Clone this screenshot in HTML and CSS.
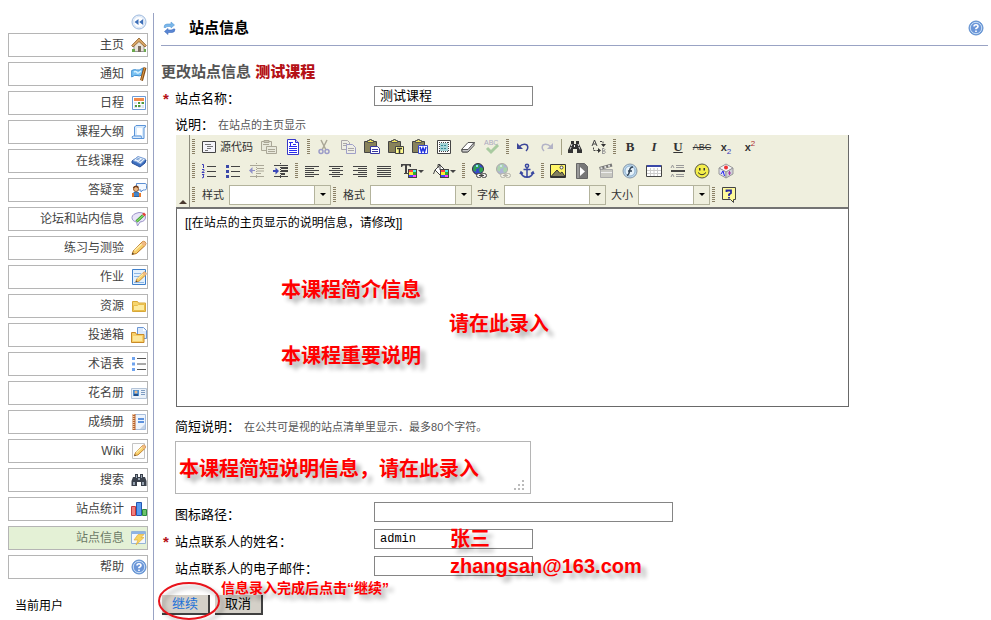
FILE: index.html
```html
<!DOCTYPE html>
<html lang="zh-CN">
<head>
<meta charset="utf-8">
<title>站点信息</title>
<link rel="stylesheet" href="styles.css">
</head>
<body>
<svg class="defs" width="0" height="0" aria-hidden="true">
  <defs>
    <symbol id="i-help" viewBox="0 0 16 16"><circle cx="8" cy="8" r="7" fill="#6f9ddc" stroke="#5f8fcf"/><circle cx="8" cy="8" r="5.7" fill="#6a95d8" stroke="#c9def6"/><path d="M6 6.6Q6 4.8 8 4.8T10 6.5Q10 7.6 8 8.5V9.3M8 10.4V12" fill="none" stroke="#fff" stroke-width="1.6"/></symbol>
    <symbol id="i-palette" viewBox="0 0 9 9"><path fill="#444" d="M0 0h9v9H0z"/><path fill="#f44" d="M1 1h4v2H1z"/><path fill="#4ee" d="M5 1h3v2H5z"/><path fill="#fe3" d="M1 3h4v3H1z"/><path fill="#3a3" d="M5 3h3v3H5z"/><path fill="#44f" d="M1 6h4v2H1z"/><path fill="#f4f" d="M5 6h3v2H5z"/></symbol>
    <symbol id="i-clip" viewBox="0 0 16 16"><path fill="#88825a" stroke="#444" d="M.5 2.500h12v11H.500z"/><path fill="#f2e45a" stroke="#555" d="M3.500 3.500v-2h2v-1h2v1h2v2z"/></symbol>
    <symbol id="i-pencil" viewBox="0 0 16 16"><path fill="#f8cf6a" stroke="#b87420" d="M1 14.500l1.500-4L11 2q2-1.500 3.300 0t0 3.300L5.500 13.500z"/><path d="M3.500 10.500L11 3.500" stroke="#fff0b0" stroke-width="1.500"/><path d="M11 2q2-1.500 3.300 0t0 3.300l-1.500 1L10 3.500z" fill="#efb985"/><path d="M1 14.500l.5-2 1.500 1.500z" fill="#333"/></symbol>
    <symbol id="i-globe" viewBox="0 0 16 16"><circle cx="7" cy="6" r="5.500" fill="#3648c8" stroke="#333"/><path fill="#2fa050" d="M3 3l4-2 2 1-1 3-3 1v3L2 7zM9 4l3 1v3l-3 2-1-3z"/><path fill="#8fe0f0" d="M5 2h2v2H5z"/><g fill="#eee" stroke="#444"><rect x="5.500" y="10.500" width="5" height="4" rx="2"/><rect x="10.500" y="10.500" width="5" height="4" rx="2"/><path d="M8 12.500h5"/></g></symbol>
  </defs>
</svg>
<div class="page">
  <nav class="sidebar" aria-label="站点工具">
    <button class="collapse" type="button" aria-label="收起菜单"><svg viewBox="0 0 16 16"><circle cx="8" cy="8" r="7" fill="#eef4fc" stroke="#9db9de"/><circle cx="8" cy="8" r="5.500" fill="#fff" stroke="#dbe7f6"/><path fill="#3d6fb8" d="M3.500 8L7.500 5v6zM8.200 8l4-3v6z"/></svg></button>
    <ul class="menu">
      <li><a href="#">主页<svg viewBox="0 0 16 16"><path fill="#e9e4da" stroke="#999" d="M3 8l5-5 5 5v6.500H3z"/><path fill="#dba868" stroke="#8a5a26" stroke-width=".8" d="M8 1L.7 8.500 2 10l6-5.500L14 10l1.300-1.500z"/><path fill="#7b6d60" d="M7 9h3v6H7z"/><path fill="#6aa84c" d="M1 12h3v3H1zM13 12h2v3h-2z"/></svg></a></li>
      <li><a href="#">通知<svg viewBox="0 0 16 16"><path fill="#7cc4f4" stroke="#3f8ed0" d="M.7 4.500q3-1.500 5-.5T12 2L11 9q-3 1.500-5 .5T.7 11z"/><path d="M3 6q2-1 3 .5T10 5" fill="none" stroke="#d6f1ff" stroke-width="1.500"/><path d="M14 1.500L10.500 14.500" stroke="#8a4e14" stroke-width="3"/><path d="M13.700 2L10.500 14" stroke="#e0a04a"/></svg></a></li>
      <li><a href="#">日程<svg viewBox="0 0 16 16"><path fill="#fff" stroke="#6d9bd6" d="M1.500 1.500h13v13h-13z"/><path fill="#f28a4a" d="M3 3h10v3H3z"/><path fill="#dce4f0" d="M3 7h10v6H3z"/><path fill="#4f9a3c" d="M7 7h2v2H7zM10 7h3v2h-3zM4 10h2v2H4zM7 10h3v2H7z"/><path stroke="#fff" d="M3 9.500h10M6.500 7v6M10 7v6"/></svg></a></li>
      <li><a href="#">课程大纲<svg viewBox="0 0 16 16"><path fill="#d8eafc" stroke="#5b94d8" d="M5 1.500h9.500q1 2-1.500 2V14.500H1.500q-1.500-2 1-2.500H3.500V3z"/><path fill="#fff" d="M6 4h5v7H6z"/><path stroke="#5b94d8" d="M3.500 12H10q1 1 0 2.500" fill="none"/></svg></a></li>
      <li><a href="#">在线课程<svg viewBox="0 0 16 16"><path fill="#3c6fc0" stroke="#28509a" d="M1 8l6-4 8 3-1 3-5 4-8-4z"/><path fill="#e8f1fc" stroke="#7da2d8" d="M2 7.500l5-4 3 1 4.500 1.500-5 5L6 9z"/><path d="M5 6l3 1M6 5l3 1M9 8l3-2M8 9l3-2" stroke="#85a8d6"/></svg></a></li>
      <li><a href="#">答疑室<svg viewBox="0 0 16 16"><path fill="#f2f8ff" stroke="#5d8fd2" d="M5.500 1.500h9q1 0 1 2v3q0 1.500-2 1.500H12L10 10V8H7q-1.500 0-1.500-2z"/><circle cx="5" cy="7" r="2.500" fill="#e9b98a" stroke="#9a5a2a"/><path fill="#4486cc" stroke="#2c62a0" d="M1.500 14.500V12q1-2 3.500-2t4 2v2.500z"/><path fill="#e7792c" d="M1 11h2v4H1zM8 11h2v4H8z"/><path d="M2.500 6Q4 3 7.500 5.500" stroke="#6e3a16" fill="none" stroke-width="1.500"/></svg></a></li>
      <li><a href="#">论坛和站内信息<svg viewBox="0 0 16 16"><path fill="#e8e4f8" stroke="#9c94c8" d="M8 1.500q6.500 0 6.500 4.500T9 11l-2.500 4L5.500 11Q1 10 1 6.500T8 1.500z"/><path d="M5.500 10.500L12 4.500" stroke="#2c8e28" stroke-width="3"/><path d="M5.500 10.500L12 4.500" stroke="#86dc62" stroke-width="1.500"/><path fill="#e0443c" d="M11 3l2-1.500 2 2L13.500 5.500z"/></svg></a></li>
      <li><a href="#">练习与测验<svg><use href="#i-pencil"/></svg></a></li>
      <li><a href="#">作业<svg viewBox="0 0 16 16"><path fill="#e4f1fd" stroke="#3f80cc" d="M1.500.5h13v15h-13z"/><path stroke="#8db8e6" d="M3 4.500h7M3 7.500h6M3 13.500h10"/><use href="#i-pencil" x="4" y="2" width="12" height="12"/></svg></a></li>
      <li><a href="#">资源<svg viewBox="0 0 16 16"><path fill="#f7d56c" stroke="#d8a838" d="M1.500 13.500v-10h5l1 1.500h7v8.500z"/><path fill="#fdeb9f" stroke="#e8bd4c" d="M2.500 12.500V7.500h4l1-1h6v6z"/></svg></a></li>
      <li><a href="#">投递箱<svg viewBox="0 0 16 16"><path fill="#dbe9fb" stroke="#6b96d4" d="M6.500.5h6l3 3v8h-9z"/><path fill="#fff" d="M12 1v3h3z"/><path fill="#f7d06a" stroke="#c98a28" d="M.5 15.500V5.500h4l1 2H13v8z"/><path fill="#fde79c" d="M2 9h9v5H2z"/></svg></a></li>
      <li><a href="#">术语表<svg viewBox="0 0 16 16"><path fill="#6fa3ee" d="M1 1h3v3H1zM1 6.500h3v3H1zM1 12h3v3H1z"/><path stroke="#555" d="M6 2.500h9M6 8h9M6 13.500h9"/></svg></a></li>
      <li><a href="#">花名册<svg viewBox="0 0 16 16"><path fill="#eaf1f9" stroke="#b4c4d8" d="M.5 3.500h15v10H.5z"/><path fill="#4a90d4" d="M2 5h6v6H2z"/><circle cx="5" cy="7" r="1.500" fill="#e8b88a"/><path fill="#244e86" d="M3 9h4v2H3z"/><path stroke="#7f9cc0" d="M10 5.500h4M10 7.500h4M10 9.500h4"/></svg></a></li>
      <li><a href="#">成绩册<svg viewBox="0 0 16 16"><path fill="#edf4fd" stroke="#a8bedc" d="M3.500.5h11v15h-11z"/><path fill="#b8622e" d="M1.500 0h3v16h-3z"/><path stroke="#f6d2a8" stroke-dasharray="1 1" d="M2.500 0v16" stroke-width="2"/><path fill="#5d92de" d="M7 4h6v2H7zM7 7h6v2H7z"/><path fill="#c3d2e6" d="M14 10v5H9z"/></svg></a></li>
      <li><a href="#">Wiki<svg viewBox="0 0 16 16"><path fill="#fdfdfd" stroke="#c4c4c4" d="M1.500.5h12v15h-12z"/><use href="#i-pencil" x="2" y="1" width="14" height="13"/></svg></a></li>
      <li><a href="#">搜索<svg viewBox="0 0 16 16"><path fill="#3a414c" d="M2 5h2V2h3v3h2V2h3v3h2l1.500 4v5H10v-4H6v4H.5V9z"/><path fill="#98a4b2" d="M2 10h2v3H2zM11 10h2v3h-2zM5 3h1v3H5zM10 3h1v3h-1zM7 6h2v2H7z"/></svg></a></li>
      <li><a href="#">站点统计<svg viewBox="0 0 16 16"><path fill="#f08080" stroke="#c83a3a" d="M.5 5.500h4v9h-4z"/><path fill="#5a9cf0" stroke="#2458b0" d="M5.500 1.500h5v13h-5z"/><path fill="#6cc46c" stroke="#2c8a3c" d="M11.500 8.500h4v6h-4z"/></svg></a></li>
      <li class="current"><a href="#" aria-current="page">站点信息<svg viewBox="0 0 16 16"><path fill="#f4f8fd" stroke="#94b4d8" d="M.5 1.500h14v12H.500z"/><path fill="#8db4e4" d="M1 2h13v2H1z"/><path fill="#f8d460" stroke="#e0b040" stroke-width=".7" d="M7 4.500h6l-3 3h3L5 15l2-5H3z"/></svg></a></li>
      <li><a href="#">帮助<svg><use href="#i-help"/></svg></a></li>
    </ul>
    <p class="user">当前用户</p>
  </nav>

  <main class="main">
    <header class="title-bar">
      <button class="icon-button" type="button" aria-label="刷新"><svg viewBox="0 0 16 16"><path fill="#79b7ea" stroke="#5b9ad6" stroke-width=".6" d="M3 7.500q0-3.500 3-3.500h4V2l3.500 3L10 8V6.500H7q-1.500 0-2 1z"/><path fill="#5a86d4" stroke="#426ebc" stroke-width=".6" d="M14 9q0 3.500-3 3.500H7v2l-3.500-3L7 8.500V10h3q1.500 0 2-1z"/></svg></button>
      <h1>站点信息</h1>
      <button class="icon-button" type="button" aria-label="帮助"><svg><use href="#i-help"/></svg></button>
    </header>

    <h2>更改站点信息 <strong>测试课程</strong></h2>

    <form class="form">
      <div class="field">
        <span class="star">*</span><label for="name">站点名称：</label>
        <div class="control"><input id="name" class="box" type="text" value="测试课程"></div>
      </div>

      <div class="caption"><label for="desc">说明：</label><small>在站点的主页显示</small></div>
      <div class="editor">
        <div class="toolbar">
          <button class="fold" type="button" aria-label="折叠工具栏"></button>
          <div class="rows">
            <div class="row">
              <i class="grip"></i>
              <button type="button" class="source"><svg viewBox="0 0 16 16"><path fill="#f4f4fa" stroke="#444" d="M1.500 2.500h13v11h-13z"/><path stroke="#777" d="M4 5.500h6M6 7.500h6M6 9.500h4M4 11.500h3"/></svg>源代码</button>
              <button type="button" aria-label="模板"><svg viewBox="0 0 16 16"><g fill="#e9e9dc" stroke="#aaa797"><path d="M.5 2.500h10v9H.500z"/><path fill="#c9c6b6" d="M3 1.500h5v2H3z"/><path d="M5.500 7.500h10v7h-10z"/><path d="M2 5.500h6M7 10.500h7M7 12.500h7"/></g></svg></button>
              <button type="button" aria-label="新建"><svg viewBox="0 0 16 16"><path fill="#fff" stroke="#3838c8" d="M2.500.500h8l3 3v12h-11z"/><path d="M10.500.500v3h3" stroke="#3838c8" fill="#ccf"/><path d="M4 3.500h4M5.500 3v4M8 5.500h3M4 7.500h8M4 9.500h8M4 11.500h8M4 13.500h8" stroke="#2a2af0"/></svg></button>
              <i class="grip"></i>
              <button type="button" aria-label="剪切"><svg viewBox="0 0 16 16"><path d="M5 1l5 10M11 1L6 11" stroke="#aaa797" stroke-width="1.500"/><g fill="none" stroke="#9c9cc8" stroke-width="1.500"><circle cx="5" cy="12.500" r="2"/><circle cx="11" cy="12.500" r="2"/></g></svg></button>
              <button type="button" aria-label="复制"><svg viewBox="0 0 16 16"><g fill="#eeeee4" stroke="#aaa7aa"><path d="M1.500 1.500h6l2 2v7h-8z"/><path stroke="#9f9fc8" d="M6.500 5.500h6l3 3v6h-9z"/><path d="M3 4.500h4M3 6.500h3M8 9.500h6M8 11.500h6"/></g></svg></button>
              <button type="button" aria-label="粘贴"><svg viewBox="0 0 16 16"><use href="#i-clip"/><path fill="#fff" stroke="#3838a0" d="M6.500 7.500h7l2 2v5h-9z"/><path d="M8 10.500h6M8 12.500h6" stroke="#3838a0"/></svg></button>
              <button type="button" aria-label="粘贴为文本"><svg viewBox="0 0 16 16"><use href="#i-clip"/><path fill="#fffb90" stroke="#444" d="M7.500 7.500h8v7h-8z"/><path d="M9 9.500h5M11.500 9v5" stroke="#333" stroke-width="1.500"/></svg></button>
              <button type="button" aria-label="从 Word 粘贴"><svg viewBox="0 0 16 16"><use href="#i-clip"/><path fill="#fff" stroke="#3848d0" d="M6.500 6.500h9v8h-9z"/><path d="M8 8l1.500 5L11 9l1.500 4L14 8" fill="none" stroke="#2232e0" stroke-width="1.500"/></svg></button>
              <button type="button" aria-label="全选"><svg viewBox="0 0 16 16"><path fill="#fff" stroke="#444" d="M1.500 1.500h13v13h-13z"/><path fill="#a5d5d8" d="M4 4h8v8H4z"/><path d="M3.500 3v10M12.500 3v10M3 3.500h10M3 12.500h10" stroke="#444" stroke-dasharray="1 1"/><path stroke="#368a98" stroke-dasharray="2 1" d="M5 6.500h6M5 9.500h6"/></svg></button>
              <button type="button" aria-label="清除格式"><svg viewBox="0 0 16 16"><path fill="#fff" stroke="#555" d="M1.500 10.500L8 3.500h6.500l-6 8-1 1.500h-5z"/><path fill="#c9c9c9" stroke="#555" d="M2 10.500h6l6-7v3L8 13H2z"/></svg></button>
              <button type="button" aria-label="拼写检查" class="spell"><svg viewBox="0 0 16 16"><text x="0" y="6" font-size="7">ABC</text><path d="M3 9l4 4 7-7" fill="none" stroke="#a9cba0" stroke-width="3"/></svg></button>
              <i class="grip"></i>
              <button type="button" aria-label="撤销"><svg viewBox="0 0 16 16"><path d="M4 8q4-4 8-2 2 3-1 6" fill="none" stroke="#3c4698" stroke-width="1.500"/><path fill="#3c4698" d="M2 4v6h6z"/></svg></button>
              <button type="button" aria-label="重做"><svg viewBox="0 0 16 16"><path d="M12 8Q8 4 4 6q-2 3 1 6" fill="none" stroke="#b3b3c6" stroke-width="1.500"/><path fill="#b3b3c6" d="M14 4v6H8z"/></svg></button>
              <i class="rule"></i>
              <button type="button" aria-label="查找"><svg viewBox="0 0 16 16"><path fill="#333" d="M4 2h3v3h2V2h3v3l3 6v3h-5v-4H6v4H1v-3l3-6z"/><path stroke="#eee" d="M5 5L3 11M11 5l2 6M7.500 6v2" stroke-dasharray="2 1"/></svg></button>
              <button type="button" aria-label="替换"><svg viewBox="0 0 16 16"><path d="M1 7l2.500-6L6 7M2 5h3" fill="none" stroke="#444"/><path d="M11.500 9v6M11 9.500h2q2 1 0 2.500h-2 2.500q2 1 0 2.500H11" fill="none" stroke="#999"/><path d="M9 2.500h3v4M2.500 8.500v3H8" fill="none" stroke="#444" stroke-dasharray="2 1"/><path fill="#333" d="M10 5h5l-2.500 3zM7 9v5l3-2.500z"/></svg></button>
              <i class="grip"></i>
              <button type="button" class="glyph bold" aria-label="加粗">B</button>
              <button type="button" class="glyph italic" aria-label="倾斜">I</button>
              <button type="button" class="glyph under" aria-label="下划线">U</button>
              <button type="button" class="glyph strike" aria-label="删除线">ABC</button>
              <button type="button" class="glyph script" aria-label="下标"><span>x<sub>2</sub></span></button>
              <button type="button" class="glyph script" aria-label="上标"><span>x<sup>2</sup></span></button>
            </div>
            <div class="row">
              <i class="grip"></i>
              <button type="button" aria-label="编号列表"><svg viewBox="0 0 16 16"><path stroke="#444" d="M6 3.500h9M6 8.500h9M6 13.500h9"/><path d="M1 1.500h1.500V5M1 6.500h2v1L1 9.500h2.500M1 11.500h2L2 13l1 1-2 1" fill="none" stroke="#3a3ab8"/></svg></button>
              <button type="button" aria-label="项目列表"><svg viewBox="0 0 16 16"><path stroke="#444" d="M6 3.500h9M6 8.500h9M6 13.500h9"/><path fill="#3a48a8" d="M1 2h3v3H1zM1 7h3v3H1zM1 12h3v3H1z"/></svg></button>
              <button type="button" aria-label="减少缩进"><svg viewBox="0 0 16 16"><path stroke="#aaa797" d="M1 2.500h14M8 5.500h7M8 8h7M8 10.500h4M1 13.500h14"/><path stroke="#aaa797" stroke-dasharray="1 1" d="M7.500 0v16"/><path fill="#9090c8" d="M0 7.500L3.500 4v3H6v1H3.500v3z"/></svg></button>
              <button type="button" aria-label="增加缩进"><svg viewBox="0 0 16 16"><path stroke="#444" d="M1 2.500h14M1 13.500h14"/><path stroke="#444" stroke-width="2" d="M8 5h7M8 8h7M8 11h4"/><path stroke="#444" stroke-dasharray="1 1" d="M7.500 0v16"/><path fill="#3a48b8" d="M6 8L2.500 4.500V7H0v2h2.500v2.500z"/></svg></button>
              <i class="grip"></i>
              <button type="button" aria-label="左对齐"><svg viewBox="0 0 16 16"><path stroke="#444" d="M1 3.500h14M1 5.500h9M1 7.500h14M1 9.500h9M1 11.500h14M1 13.500h9"/></svg></button>
              <button type="button" aria-label="居中"><svg viewBox="0 0 16 16"><path stroke="#444" d="M1 3.500h14M4 5.500h8M1 7.500h14M4 9.500h8M1 11.500h14M4 13.500h8"/></svg></button>
              <button type="button" aria-label="右对齐"><svg viewBox="0 0 16 16"><path stroke="#444" d="M1 3.500h14M6 5.500h9M1 7.500h14M6 9.500h9M1 11.500h14M6 13.500h9"/></svg></button>
              <button type="button" aria-label="两端对齐"><svg viewBox="0 0 16 16"><path stroke="#444" d="M1 3.500h14M1 5.500h14M1 7.500h14M1 9.500h14M1 11.500h14M1 13.500h14"/></svg></button>
              <button type="button" class="drop" aria-label="文本颜色"><svg viewBox="0 0 16 16"><path fill="#444" d="M0 1h10v3H9L8 2.500H6V10h1v1H3v-1h1V2.500H2L1 4H0z"/><use href="#i-palette" x="7" y="6" width="9" height="9"/></svg></button>
              <button type="button" class="drop" aria-label="背景颜色"><svg viewBox="0 0 16 16"><path fill="#fff" stroke="#444" d="M2 7l5-5 5 5-5 5z"/><path d="M5 5V1.500h2V7M2 7l-1.500 4" fill="none" stroke="#444"/><use href="#i-palette" x="7" y="6" width="9" height="9"/></svg></button>
              <i class="grip"></i>
              <button type="button" aria-label="插入链接"><svg><use href="#i-globe"/></svg></button>
              <button type="button" aria-label="取消链接" class="off"><svg><use href="#i-globe"/></svg></button>
              <button type="button" aria-label="锚点"><svg viewBox="0 0 16 16"><g fill="none" stroke="#3a48a0" stroke-width="1.500"><circle cx="8" cy="2.800" r="1.600"/><path d="M8 4.500V14M4.500 6.500h7M2 9.500Q3 14 8 14.300 13 14 14 9.500M1 11l1-2 2 1.500M12 10.500L14 9l1 2"/></g></svg></button>
              <i class="grip"></i>
              <button type="button" aria-label="图像"><svg viewBox="0 0 16 16"><path fill="#fff568" stroke="#333" d="M.5 1.500h15v13H.500z"/><circle cx="11.500" cy="4.500" r="1.500" fill="#fff" stroke="#444"/><path fill="#84805e" stroke="#333" d="M1 13.500L7 7l3 3.500 2-1.500 3 4.500z"/></svg></button>
              <button type="button" aria-label="Flash"><svg viewBox="0 0 16 16"><path fill="#777" stroke="#666" d="M2.500.5h8l3 3v12h-11z"/><path fill="#999" d="M3 1h2v14H3z"/><path fill="#fff" d="M6 4l5 4.500L6 13z"/></svg></button>
              <button type="button" aria-label="视频"><svg viewBox="0 0 16 16"><path fill="#c9c9c2" stroke="#aaa" d="M2.500 6.500h12v8h-12z"/><path stroke="#eee" d="M3 9.500h11"/><path d="M1.500 5.500L14 2" stroke="#777" stroke-width="3"/><path d="M2.500 5.500L14 2" stroke="#ddd" stroke-width="2" stroke-dasharray="2 2"/></svg></button>
              <button type="button" aria-label="嵌入"><svg viewBox="0 0 16 16"><circle cx="8" cy="8" r="7" fill="#bcd7ec" stroke="#89a"/><circle cx="8" cy="8" r="5" fill="#e6f2fa" stroke="#8fb2d0"/><path d="M11 4Q8 4 7.500 8T5 12.500M6 8h4" fill="none" stroke="#345" stroke-width="1.500"/></svg></button>
              <button type="button" aria-label="表格"><svg viewBox="0 0 16 16"><path fill="#fff" stroke="#444" d="M.5 2.500h15v11H.500z"/><path fill="#3a48a8" d="M1 2h14v2H1z"/><path stroke="#ccc" d="M1 7.500h14M1 10.500h14M4.500 5v8M8 5v8M11.500 5v8"/></svg></button>
              <button type="button" aria-label="水平线"><svg viewBox="0 0 16 16"><path stroke="#999" d="M6 2.500h8M6 4.500h8M6 11.500h8M6 13.500h8M1 5l1.500-3L4 5M1 14l1.500-3L4 14" fill="none"/><path fill="#444" d="M1 7h14v2H1z"/></svg></button>
              <button type="button" aria-label="表情"><svg viewBox="0 0 16 16"><circle cx="8" cy="8" r="7" fill="#f4ee4a" stroke="#554"/><path fill="#333" d="M5 5h1.500v2.500H5zM9.500 5H11v2.500H9.500z"/><path d="M4 9.500Q8 14 12 9.500" fill="none" stroke="#333"/></svg></button>
              <button type="button" aria-label="特殊字符"><svg viewBox="0 0 16 16"><path fill="#f5f5fa" stroke="#999" d="M8 1l7 4-7 4-7-4z"/><path fill="#e2e2f2" stroke="#999" d="M1 5l7 4v6l-7-4z"/><path fill="#cfcfd8" stroke="#999" d="M15 5L8 9v6l7-4z"/><circle cx="8" cy="4.500" r="2" fill="#e33"/><path d="M3 11l2-3 1.500 5" fill="none" stroke="#22e"/><path stroke="#a3a" d="M11.500 8v4M10 10h3"/></svg></button>
            </div>
            <div class="row">
              <i class="grip"></i>
              <label class="combo"><span>样式</span><b><select><option></option></select></b></label>
              <i class="grip"></i>
              <label class="combo"><span>格式</span><b><select><option></option></select></b></label>
              <label class="combo"><span>字体</span><b><select><option></option></select></b></label>
              <label class="combo short"><span>大小</span><b><select><option></option></select></b></label>
              <i class="grip"></i>
              <button type="button" aria-label="关于"><svg viewBox="0 0 16 16"><path fill="#fffb9a" stroke="#444" d="M1.500.5h13v12h-2v3l-3-3h-8z"/><path d="M5.500 5V3.500h4.500V6L8 7.500V9M8 10v1.500" fill="none" stroke="#2a2aa0" stroke-width="1.800"/></svg></button>
            </div>
          </div>
        </div>
        <textarea id="desc">[[在站点的主页显示的说明信息，请修改]]</textarea>
        <span class="note intro">本课程简介信息</span>
        <span class="note enter">请在此录入</span>
        <span class="note important">本课程重要说明</span>
      </div>

      <div class="caption second"><label for="short">简短说明：</label><small>在公共可是视的站点清单里显示．最多80个字符。</small></div>
      <div class="short-box"><textarea id="short"></textarea>
        <svg class="resizer" viewBox="0 0 10 10"><path fill="#bbb" d="M8 0h2v2H8zM8 4h2v2H8zM8 8h2v2H8zM4 4h2v2H4zM4 8h2v2H4zM0 8h2v2H0z"/></svg>
        <span class="note brief">本课程简短说明信息，请在此录入</span>
      </div>

      <div class="field">
        <span class="star"></span><label for="icon">图标路径：</label>
        <div class="control"><input id="icon" class="box wide" type="text"></div>
      </div>
      <div class="field">
        <span class="star">*</span><label for="contact">站点联系人的姓名：</label>
        <div class="control"><input id="contact" class="box mono" type="text" value="admin"><span class="note inline">张三</span></div>
      </div>
      <div class="field">
        <span class="star"></span><label for="mail">站点联系人的电子邮件：</label>
        <div class="control"><input id="mail" class="box" type="text"><span class="note inline">zhangsan@163.com</span></div>
      </div>

      <div class="actions">
        <button type="submit" class="go">继续</button>
        <button type="button">取消</button>
        <svg class="ring" viewBox="0 0 64 40"><ellipse cx="31" cy="20" rx="30" ry="18"/></svg>
        <span class="note hint">信息录入完成后点击“继续”</span>
      </div>
    </form>
  </main>
</div>
</body>
</html>
```
FILE: styles.css
```css
* { box-sizing: border-box; }

body {
  margin: 0;
  background: #fff;
  color: #000;
  font: 13px/20px "Liberation Sans", "Noto Sans CJK SC", sans-serif;
}

h1, h2, p, ul { margin: 0; padding: 0; }
button, input, select, textarea { font: inherit; color: inherit; }
svg { display: block; width: 16px; height: 16px; flex: none; }
.defs { position: absolute; width: 0; height: 0; }

.page { display: flex; overflow: hidden; min-height: 100vh; }

/* Sidebar */
.sidebar {
  flex: 0 0 154px;
  margin-top: 13px;
  padding: 1px 5px 0 8px;
  border-right: 1px solid #99a3c4;
}
.collapse, .icon-button {
  display: block;
  padding: 0;
  border: 0;
  background: none;
}
.collapse { margin: 0 1px 3px auto; }
.menu { list-style: none; display: grid; gap: 5px; }
.menu a {
  display: flex;
  align-items: center;
  justify-content: flex-end;
  gap: 7px;
  height: 24px;
  border: 1px solid #b5b5b5;
  color: #444;
  font-size: 12px;
  text-decoration: none;
}
.menu .current a { background: #e4f1d6; color: #6c7a66; }
.user { margin: 17px 0 0 7px; font-size: 12px; }

/* Heading */
.main { flex: 1; min-width: 0; padding: 0 3px 0 7px; }
.title-bar {
  display: flex;
  align-items: center;
  height: 46px;
  padding: 10px 4px 0 0;
  border-bottom: 1px solid #99a3c4;
}
.title-bar h1 { flex: 1; margin-left: 12px; font-size: 15px; }
h2 { margin-top: 16px; color: #555; font-size: 15px; }
h2 strong { color: #b51217; }

/* Form */
.form { padding: 1px 0 4px; }
.field {
  display: grid;
  grid-template-columns: 14px 199px 1fr;
  grid-template-rows: 24px;
  margin-top: 3px;
}
.field label { padding-top: 3px; }
.star { padding: 3px 0 0 2px; color: #b51217; font-size: 15px; font-weight: bold; }
.control { position: relative; }
.box {
  display: block;
  width: 159px;
  height: 20px;
  padding: 0 5px;
  border: 1px solid #858585;
  background: #fff;
}
.wide { width: 299px; }
.mono { font: 12px/18px "Liberation Mono", monospace; }
.caption { margin: 5px 0 0 14px; line-height: 20px; }
.caption small { margin-left: 4px; color: #555; font-size: 11px; }
.caption.second { margin-top: 10px; }

/* Editor */
.editor {
  position: relative;
  max-width: 673px;
  margin-left: 15px;
  border-right: 1px solid #696969;
}
.toolbar { display: flex; background: #efefde; border-bottom: 2px solid #737373; }
.fold {
  display: flex;
  align-items: flex-end;
  width: 14px;
  padding: 0 3px 3px;
  border: 0;
  border-right: 1px solid #8c8b7d;
  background: none;
}
.fold::after {
  content: "";
  border: 4px solid transparent;
  border-top: 0;
  border-bottom-color: #4a3a30;
}
.row { display: flex; align-items: center; height: 24px; }
.row button {
  display: flex;
  align-items: center;
  justify-content: center;
  width: 24px;
  height: 24px;
  padding: 0;
  border: 0;
  background: none;
  color: #333;
}
.row .source { width: 60px; gap: 3px; font-size: 11px; }
.row .off { opacity: .35; }
.row .drop { width: 32px; gap: 1px; }
.drop::after {
  content: "";
  border: 3px solid transparent;
  border-top-color: #444;
  border-bottom: 0;
  width: 0;
}
.grip {
  width: 3px;
  height: 16px;
  margin: 0 2px;
  background: repeating-linear-gradient(#8a8066 0 1px, #efefde 1px 2px);
}
.rule { width: 1px; height: 16px; margin: 0 1px 0 2px; background: #a5a284; }
.spell text { fill: #aaa8c0; font-family: "Liberation Sans", sans-serif; }
.row .glyph { font: bold 13px/16px "Liberation Serif", serif; }
.row .italic { font-style: italic; }
.row .under { text-decoration: underline; }
.row .strike { font: 9px/16px "Liberation Sans", sans-serif; text-decoration: line-through; }
.row .script { font: bold 11px/16px "Liberation Sans", sans-serif; }
.glyph sub, .glyph sup { font-size: 8px; font-weight: normal; line-height: 0; }
.glyph sub { color: #3a3ab8; }
.glyph sup { color: #b03030; }
.combo { display: flex; align-items: center; font-size: 11px; color: #333; }
.combo span { width: 32px; padding-left: 5px; }
.combo b { position: relative; display: block; width: 102px; height: 20px; }
.combo.short b { width: 72px; }
.combo select {
  appearance: none;
  width: 100%;
  height: 20px;
  border: 1px solid #b3b39c;
  border-radius: 0;
  background: #fff;
}
.combo b::before {
  content: "";
  position: absolute;
  inset: 1px 1px 1px auto;
  width: 15px;
  border-left: 1px solid #b3b39c;
  background: #efefde;
  pointer-events: none;
}
.combo b::after {
  content: "";
  position: absolute;
  top: 8px;
  right: 5px;
  border: 3px solid transparent;
  border-top-color: #000;
  border-bottom: 0;
  pointer-events: none;
}
.editor textarea {
  display: block;
  width: 100%;
  height: 198px;
  padding: 4px 8px;
  border: 1px solid #696969;
  border-width: 0 0 1px 1px;
  resize: none;
  font-size: 12px;
}

.short-box { position: relative; max-width: 356px; margin: 4px 0 8px 14px; }
.short-box textarea {
  display: block;
  width: 100%;
  height: 53px;
  border: 1px solid #b5b5b5;
  resize: none;
}
.resizer { position: absolute; right: 7px; bottom: 4px; width: 10px; height: 10px; }

.actions { position: relative; display: flex; gap: 5px; margin-top: 15px; padding-left: 1px; }
.actions button {
  width: 48px;
  height: 20px;
  padding: 0;
  border: 0 solid #404040;
  border-width: 0 2px 2px 0;
  background: #d4d0c8;
  line-height: 18px;
}
.actions .go { color: #1a6fd8; }

/* Red annotations laid over the form */
.note {
  position: absolute;
  color: #f00;
  font-size: 20px;
  font-weight: bold;
  line-height: 24px;
  text-shadow: 5px 5px 4px rgba(0, 0, 0, .3);
  white-space: nowrap;
  pointer-events: none;
}
.intro { left: 105px; top: 143px; }
.enter { left: 273px; top: 177px; }
.important { left: 105px; top: 209px; }
.brief { left: 4px; top: 16px; }
.inline { left: 76px; top: -2px; }
.hint { left: 60px; top: -19px; font-size: 14px; }
.ring {
  position: absolute;
  left: -3px;
  top: -14px;
  width: 64px;
  height: 40px;
  fill: none;
  stroke: #e8141c;
  stroke-width: 2;
  filter: drop-shadow(4px 4px 2px rgba(0, 0, 0, .3));
  pointer-events: none;
}
```
